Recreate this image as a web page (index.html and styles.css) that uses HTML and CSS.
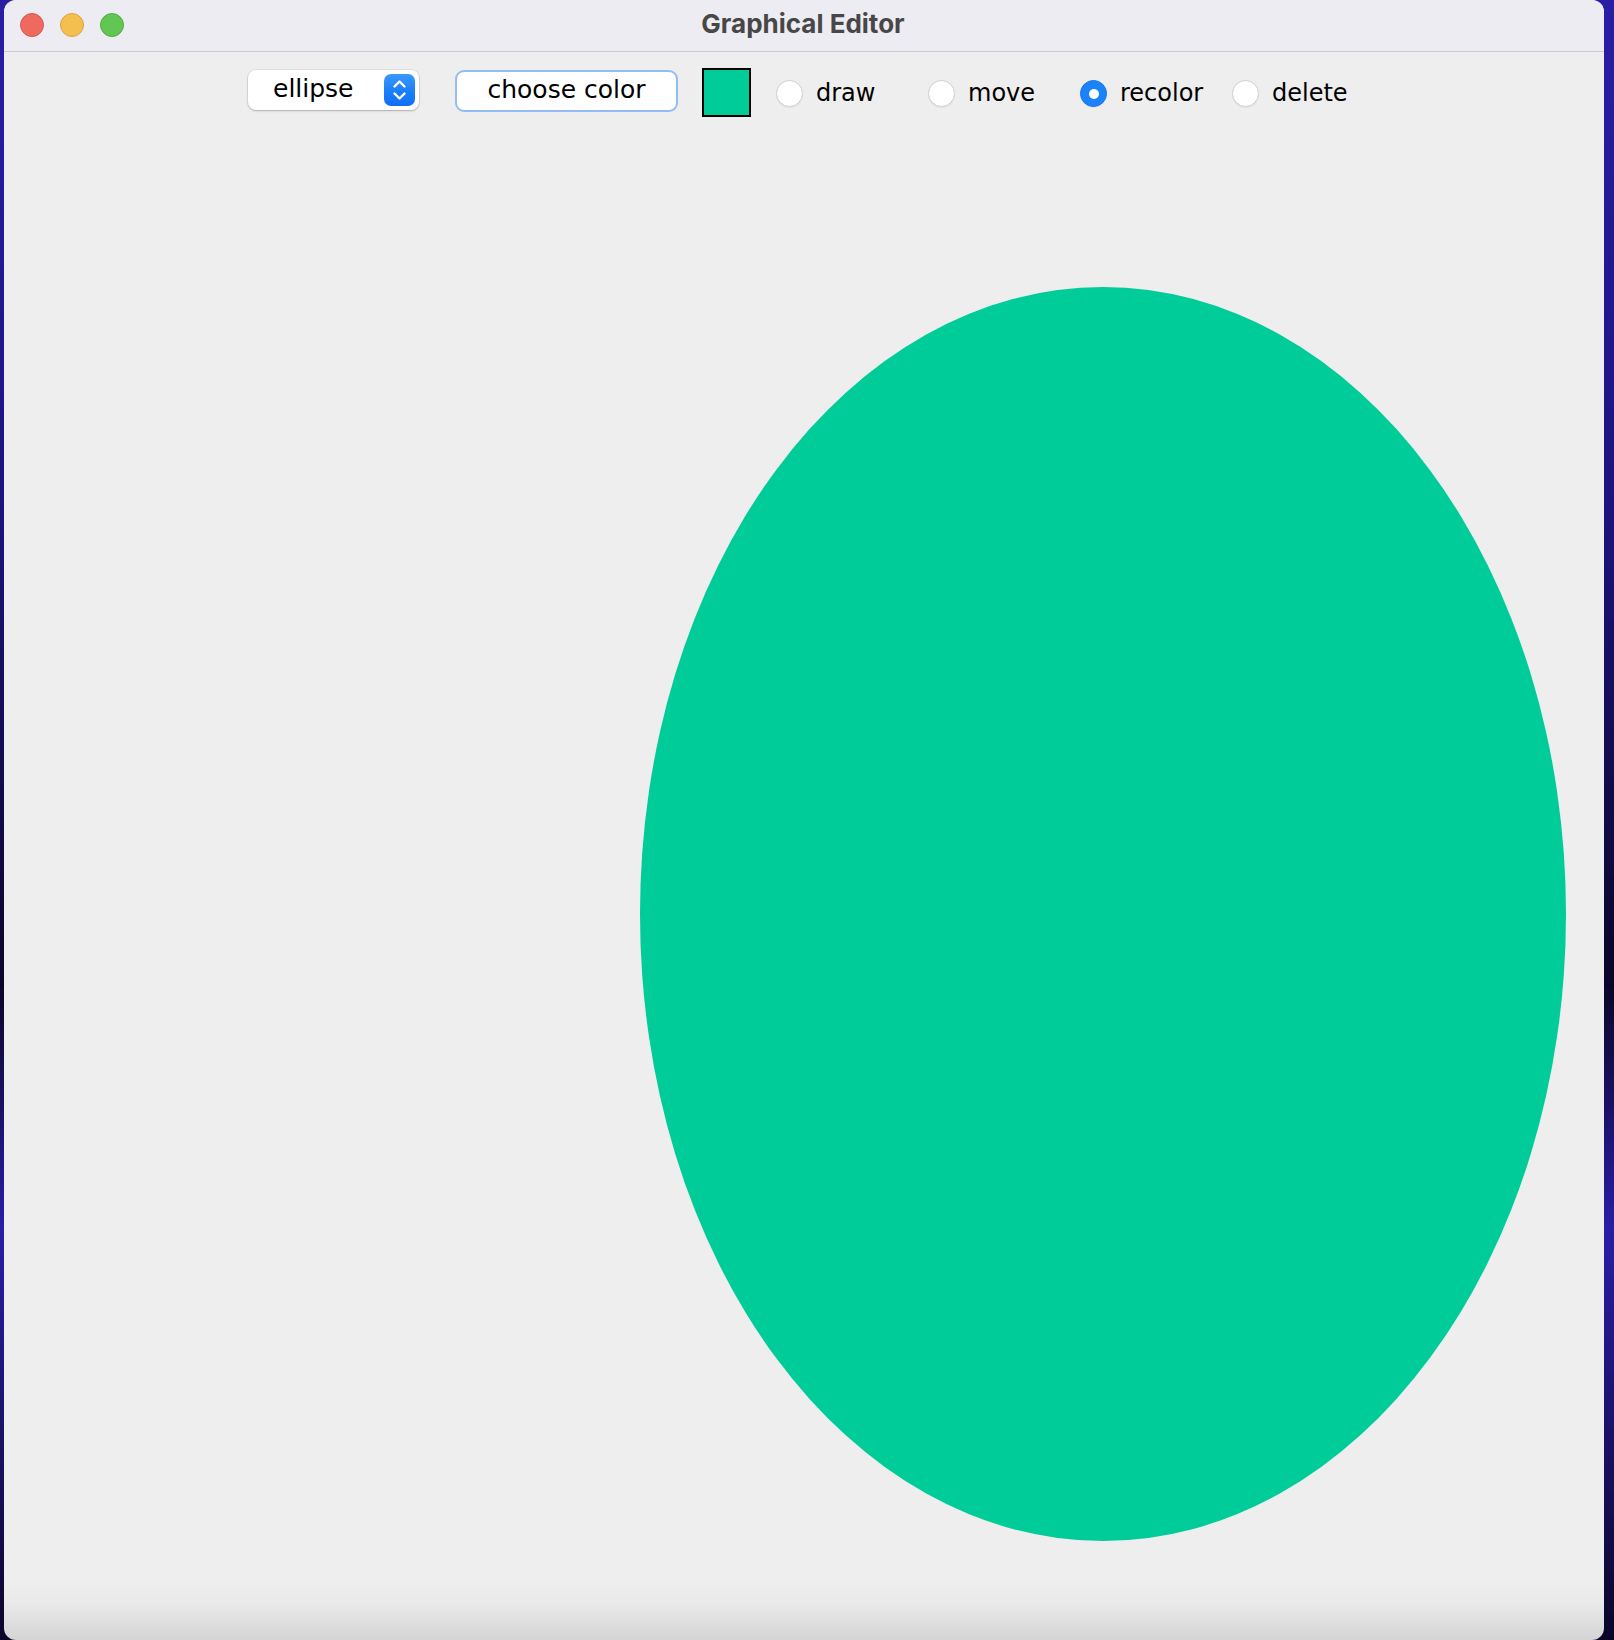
FILE: index.html
```html
<!DOCTYPE html>
<html>
<head>
<meta charset="utf-8">
<title>Graphical Editor</title>
<link rel="stylesheet" href="styles.css">
</head>
<body>
<div class="desktop">
  <div class="window">
    <div class="titlebar">
      <div class="lights">
        <span class="light red"></span>
        <span class="light yellow"></span>
        <span class="light green"></span>
      </div>
      <div class="title">Graphical Editor</div>
    </div>
    <div class="toolbar">
      <div class="combo">
        <span class="combo-text">ellipse</span>
        <span class="stepper">
          <svg width="31" height="32" viewBox="0 0 31 32">
            <path d="M10.5 12.5 L15.5 7.5 L20.5 12.5" fill="none" stroke="#fff" stroke-width="2.4" stroke-linecap="round" stroke-linejoin="round"/>
            <path d="M10.5 19.5 L15.5 24.5 L20.5 19.5" fill="none" stroke="#fff" stroke-width="2.4" stroke-linecap="round" stroke-linejoin="round"/>
          </svg>
        </span>
      </div>
      <div class="button">choose color</div>
      <div class="swatch"></div>
      <div class="radios">
        <label class="radio"><span class="circle"></span><span class="label">draw</span></label>
        <label class="radio"><span class="circle"></span><span class="label">move</span></label>
        <label class="radio"><span class="circle checked"></span><span class="label">recolor</span></label>
        <label class="radio"><span class="circle"></span><span class="label">delete</span></label>
      </div>
    </div>
    <div class="canvas">
      <svg class="drawing" width="1600" height="1512" viewBox="0 0 1600 1512">
        <ellipse cx="1099" cy="786" rx="463" ry="627" fill="#00CC99"/>
      </svg>
    </div>
  </div>
</div>
</body>
</html>
```
FILE: styles.css
```css
html, body {
  margin: 0;
  padding: 0;
}
body {
  width: 1614px;
  height: 1640px;
  overflow: hidden;
  background: linear-gradient(180deg, #2a1ea6 0%, #1d1480 30%, #0b0628 60%, #2a1ea6 75%, #0b0628 100%);
}
.desktop {
  padding-left: 4px;
  height: 1640px;
}
.window {
  width: 1600px;
  height: 1640px;
  background: #eeeeee;
  border-radius: 12px;
  overflow: hidden;
  display: flex;
  flex-direction: column;
  position: relative;
}
.window::after {
  content: "";
  position: absolute;
  left: 0;
  right: 0;
  bottom: 0;
  height: 60px;
  background: linear-gradient(180deg, rgba(0,0,0,0) 0%, rgba(0,0,0,0.02) 40%, rgba(0,0,0,0.11) 100%);
  pointer-events: none;
}
.titlebar {
  height: 51px;
  background: #edecf2;
  border-bottom: 1px solid #cbcbcf;
  display: flex;
  align-items: center;
  position: relative;
  flex: none;
}
.lights {
  display: flex;
  gap: 16px;
  padding-left: 16px;
  padding-bottom: 2px;
}
.light {
  width: 24px;
  height: 24px;
  border-radius: 50%;
  box-sizing: border-box;
}
.red { background: #ee6a5f; border: 1px solid #d65a50; }
.yellow { background: #f5bf4f; border: 1px solid #d9a33f; }
.green { background: #62c554; border: 1px solid #52ad45; }
.title {
  position: absolute;
  left: 0;
  right: 0;
  top: 0;
  height: 47px;
  line-height: 47px;
  text-align: center;
  font-family: Inter, "Noto Sans", sans-serif;
  font-weight: 700;
  font-size: 26px;
  color: #474747;
  margin-left: -2px;
}
.toolbar {
  height: 76px;
  display: flex;
  align-items: center;
  padding-left: 244px;
  box-sizing: border-box;
  flex: none;
  font-family: "DejaVu Sans", "Liberation Sans", sans-serif;
  color: #000;
}
.combo {
  width: 171px;
  height: 40px;
  box-sizing: border-box;
  background: #ffffff;
  border-radius: 8px;
  box-shadow: 0 0 0 1px rgba(0,0,0,0.06), 0 1px 2px rgba(0,0,0,0.22);
  display: flex;
  align-items: center;
  justify-content: space-between;
  padding: 0 4px 0 25px;
}
.combo-text {
  font-size: 25px;
  line-height: 1;
  padding-bottom: 3px;
}
.stepper {
  width: 31px;
  height: 32px;
  border-radius: 7px;
  background: linear-gradient(180deg, #3b98fd 0%, #1a7ffb 55%, #0f6ff5 100%);
  display: block;
}
.stepper svg { display: block; }
.button {
  margin-left: 36px;
  width: 223px;
  height: 42px;
  box-sizing: border-box;
  background: #ffffff;
  border: 2px solid #92bdf2;
  border-radius: 9px;
  display: flex;
  align-items: center;
  justify-content: center;
  font-size: 25px;
  padding-bottom: 4px;
  margin-top: 2px;
}
.swatch {
  margin-left: 24px;
  width: 49px;
  height: 49px;
  box-sizing: border-box;
  background: #00cc99;
  border: 2px solid #000;
  margin-top: 4px;
}
.radios {
  display: flex;
  margin-left: 25px;
  margin-top: 7px;
}
.radio {
  width: 152px;
  display: flex;
  align-items: center;
}
.radio:last-child { width: auto; }
.circle {
  width: 27px;
  height: 27px;
  box-sizing: border-box;
  border-radius: 50%;
  background: #ffffff;
  border: 1px solid #cfcfcf;
  box-shadow: 0 1px 1px rgba(0,0,0,0.05);
  flex: none;
  display: flex;
  align-items: center;
  justify-content: center;
}
.circle.checked {
  background: #1a82fb;
  border-color: #1676ea;
}
.circle.checked::after {
  content: "";
  width: 10px;
  height: 10px;
  border-radius: 50%;
  background: #ffffff;
}
.label {
  margin-left: 13px;
  font-family: "DejaVu Sans", sans-serif;
  font-size: 24px;
  line-height: 1;
  padding-bottom: 2px;
}
.canvas {
  flex: 1;
  position: relative;
}
.drawing {
  display: block;
}
```
